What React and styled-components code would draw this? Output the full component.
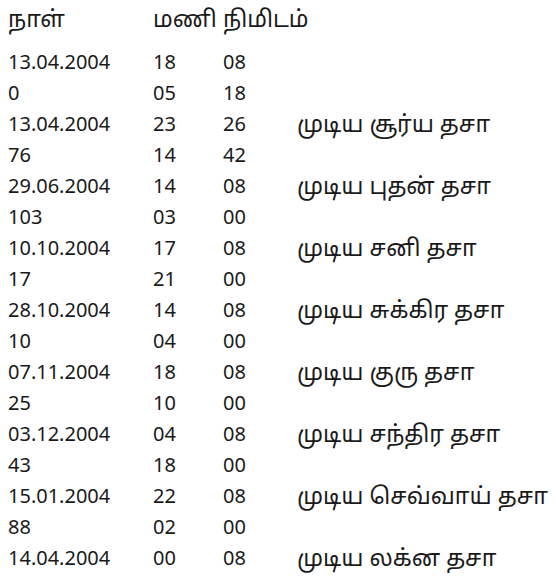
import React from "react";
import styled, { createGlobalStyle } from "styled-components";

const Global = createGlobalStyle`
  html, body {
    margin: 0;
    padding: 0;
    background: #ffffff;
  }
  body {
    font-family: "Noto Sans", "Noto Sans Tamil", "Open Sans", sans-serif;
    color: #1a1a1a;
  }
`;

const Sheet = styled.div`
  padding: 3px 0 0 8px;
  font-size: 20px;
`;

const Row = styled.div`
  display: grid;
  grid-template-columns: 145px 70px 74px 1fr;
  height: 31px;
  line-height: 31px;
  white-space: nowrap;
`;

const HeadRow = styled(Row)`
  margin-bottom: 12px;
`;

const Cell = styled.span`
  display: block;
  font-size: ${(p) => (p.$tamil ? "23px" : "20px")};
`;

const rows = [
  ["13.04.2004", "18", "08", ""],
  ["0", "05", "18", ""],
  ["13.04.2004", "23", "26", "முடிய சூர்ய தசா"],
  ["76", "14", "42", ""],
  ["29.06.2004", "14", "08", "முடிய புதன் தசா"],
  ["103", "03", "00", ""],
  ["10.10.2004", "17", "08", "முடிய சனி தசா"],
  ["17", "21", "00", ""],
  ["28.10.2004", "14", "08", "முடிய சுக்கிர தசா"],
  ["10", "04", "00", ""],
  ["07.11.2004", "18", "08", "முடிய குரு தசா"],
  ["25", "10", "00", ""],
  ["03.12.2004", "04", "08", "முடிய சந்திர தசா"],
  ["43", "18", "00", ""],
  ["15.01.2004", "22", "08", "முடிய செவ்வாய் தசா"],
  ["88", "02", "00", ""],
  ["14.04.2004", "00", "08", "முடிய லக்ன தசா"],
];

export default function App() {
  return (
    <>
      <Global />
      <Sheet>
        <HeadRow>
          <Cell $tamil>நாள்</Cell>
          <Cell $tamil>மணி</Cell>
          <Cell $tamil>நிமிடம்</Cell>
          <Cell />
        </HeadRow>
        {rows.map((r, i) => (
          <Row key={i}>
            {r.map((c, j) => (
              <Cell key={j} $tamil={j === 3}>
                {c}
              </Cell>
            ))}
          </Row>
        ))}
      </Sheet>
    </>
  );
}
